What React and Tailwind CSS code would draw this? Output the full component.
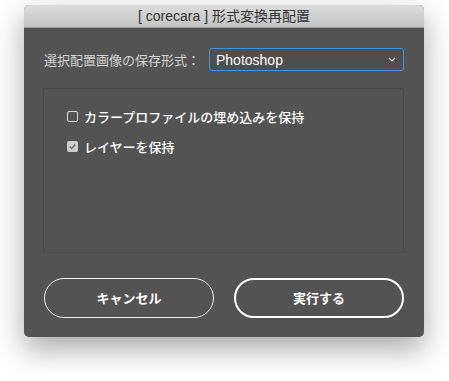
export default function App() {
  const jp = { fontFamily: '"Noto Sans CJK JP", "Liberation Sans", sans-serif' };
  return (
    <div className="w-[449px] h-[381px] bg-white overflow-hidden pt-[5px] pl-[24px]">
      <div className="w-[400px] h-[332px] rounded-[5px] bg-[#535353] shadow-[0_12px_30px_rgba(0,0,0,0.35)] flex flex-col overflow-hidden">
        <div
          className="h-[23px] shrink-0 flex items-center justify-center bg-gradient-to-b from-[#dcdcdc] to-[#c4c4c4] border-b border-[#9a9a9a] text-[14px] text-[#333]"
          style={{ fontFamily: '"Liberation Sans", "Noto Sans CJK JP", sans-serif' }}
        >
          [ corecara ] 形式変換再配置
        </div>
        <div className="flex flex-col pl-[19px] pr-[20px] pt-[20px]">
          <div className="flex items-center h-[23px]">
            <span className="pl-[1px] text-[13px] text-[#d4d4d4] w-[166px] leading-none" style={jp}>
              選択配置画像の保存形式：
            </span>
            <div className="flex-1 h-[23px] rounded-[3px] border border-[#4d8fd1] bg-[#4e4e4e] flex items-center justify-between pl-[6px] pr-[7px]">
              <span className="text-[14px] text-white leading-none" style={{ fontFamily: '"Liberation Sans", sans-serif' }}>
                Photoshop
              </span>
              <svg width="8" height="5" viewBox="0 0 8 5" fill="none">
                <path d="M1 1l3 3 3-3" stroke="#e0e0e0" strokeWidth="1.2" />
              </svg>
            </div>
          </div>
          <div className="mt-[17px] h-[165px] border border-[#4a4a4a] rounded-[2px] pl-[23px] pt-[20px] flex flex-col gap-[15px]">
            <div className="flex items-center gap-[6px] h-[15px]">
              <span className="w-[11px] h-[11px] border border-[#d8d8d8] rounded-[2px]" />
              <span className="text-[13px] font-medium text-white leading-none" style={jp}>
                カラープロファイルの埋め込みを保持
              </span>
            </div>
            <div className="flex items-center gap-[6px] h-[15px]">
              <span className="w-[11px] h-[11px] rounded-[2px] bg-[#cfcfcf] flex items-center justify-center">
                <svg width="9" height="9" viewBox="0 0 9 9" fill="none">
                  <path d="M1.8 4.6l1.9 1.9 3.6-4" stroke="#6b6b6b" strokeWidth="1.4" />
                </svg>
              </span>
              <span className="text-[13px] font-medium text-white leading-none" style={jp}>
                レイヤーを保持
              </span>
            </div>
          </div>
          <div className="mt-[25px] flex gap-[20px] pl-[1px]">
            <button
              className="w-[170px] h-[40px] rounded-full border border-[#f0f0f0] text-white text-[13px] font-semibold flex items-center justify-center"
              style={jp}
            >
              キャンセル
            </button>
            <button
              className="w-[170px] h-[40px] rounded-full border-2 border-white text-white text-[13px] font-semibold flex items-center justify-center"
              style={jp}
            >
              実行する
            </button>
          </div>
        </div>
      </div>
    </div>
  );
}
